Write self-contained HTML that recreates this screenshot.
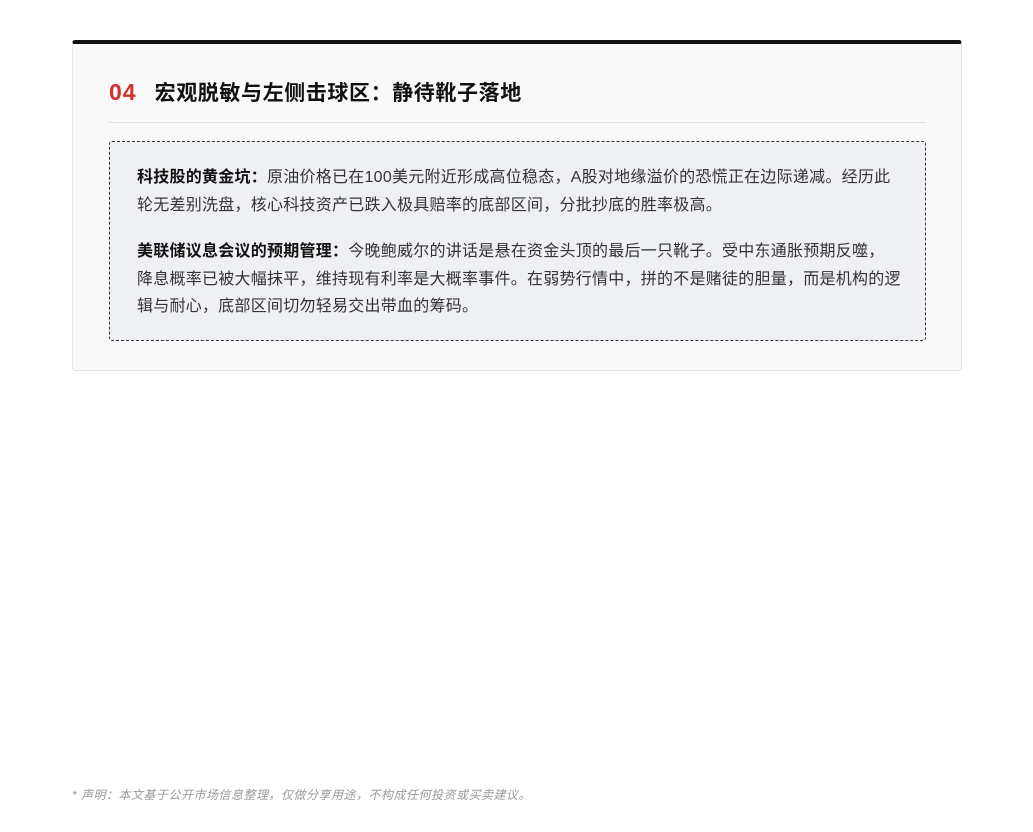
<!DOCTYPE html>
<html><head><meta charset="utf-8"><style>
body{margin:0;background:#fff;font-family:"Liberation Sans","Noto Sans CJK SC",sans-serif;}
.card{position:absolute;left:72px;top:40px;width:888px;height:326px;background:#f9f9f9;border:1px solid #e2e2e2;border-top:4px solid #111;border-radius:3px;}
h2{position:absolute;left:36px;top:33px;margin:0;font-size:21px;font-weight:bold;color:#111;line-height:30px;white-space:nowrap;letter-spacing:0.6px}
h2 .n{color:#d0312d;font-size:23px;margin-right:18px;letter-spacing:1px}
.hr{position:absolute;left:36px;top:78px;width:817px;height:1px;background:#e0e0e0}
.box{position:absolute;left:36px;top:97px;width:815px;height:198px;background:#eef0f4;border:1px dashed #333;border-radius:3px}
.box p{margin:0;position:absolute;left:27px;white-space:nowrap;font-size:16px;line-height:27.5px;color:#333;letter-spacing:0.25px}
.box b{color:#111}
.foot{position:absolute;left:72px;top:786px;font-size:12px;color:#999;font-style:italic;letter-spacing:0.5px}
</style></head><body>
<div class="card">
<h2><span class="n">04</span>宏观脱敏与左侧击球区：静待靴子落地</h2>
<div class="hr"></div>
<div class="box">
<p style="top:22px"><b>科技股的黄金坑：</b>原油价格已在100美元附近形成高位稳态，A股对地缘溢价的恐慌正在边际递减。经历此<br>轮无差别洗盘，核心科技资产已跌入极具赔率的底部区间，分批抄底的胜率极高。</p>
<p style="top:96px"><b>美联储议息会议的预期管理：</b>今晚鲍威尔的讲话是悬在资金头顶的最后一只靴子。受中东通胀预期反噬，<br>降息概率已被大幅抹平，维持现有利率是大概率事件。在弱势行情中，拼的不是赌徒的胆量，而是机构的逻<br>辑与耐心，底部区间切勿轻易交出带血的筹码。</p>
</div>
</div>
<div class="foot">* 声明：本文基于公开市场信息整理，仅做分享用途，不构成任何投资或买卖建议。</div>
</body></html>
